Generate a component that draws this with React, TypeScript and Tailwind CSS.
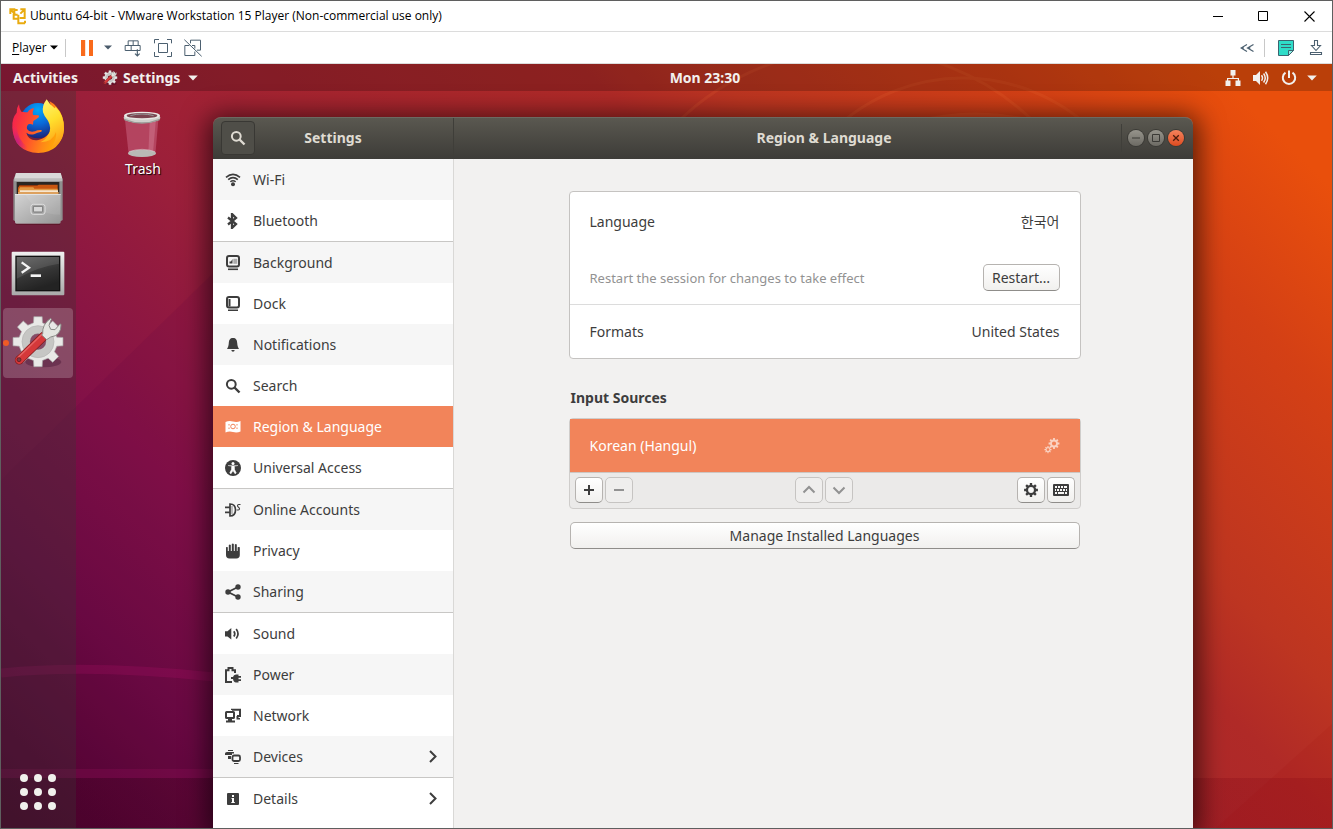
import React from "react";

type IconProps = { className?: string };

function gearPath(cx: number, cy: number, outer: number, inner: number, teeth: number, hole: number) {
  const pts: string[] = [];
  const step = (Math.PI * 2) / teeth;
  for (let i = 0; i < teeth; i++) {
    const a = i * step - Math.PI / 2;
    const corners: [number, number][] = [
      [inner, -0.3],
      [outer, -0.21],
      [outer, 0.21],
      [inner, 0.3],
    ];
    for (const [r, k] of corners) {
      pts.push(`${(cx + r * Math.cos(a + k * step)).toFixed(2)} ${(cy + r * Math.sin(a + k * step)).toFixed(2)}`);
    }
  }
  return `M${pts.join("L")}ZM${cx - hole} ${cy}a${hole} ${hole} 0 1 0 ${hole * 2} 0a${hole} ${hole} 0 1 0 ${-hole * 2} 0Z`;
}

function Glyph({ children, className = "size-4" }: { children: React.ReactNode; className?: string }) {
  return (
    <svg viewBox="0 0 16 16" className={`shrink-0 ${className}`} fill="currentColor" aria-hidden="true">
      {children}
    </svg>
  );
}

const WifiIcon = () => (
  <Glyph>
    <g fill="none" stroke="currentColor" strokeWidth="1.7">
      <path d="M1 5.3Q8-.6 15 5.3" />
      <path d="M3.2 7.7Q8 3.6 12.8 7.7" />
      <path d="M5.3 9.8Q8 7.6 10.7 9.8" strokeWidth="1.4" />
    </g>
    <circle cx="8" cy="12.3" r="2" />
  </Glyph>
);
const BluetoothIcon = () => (
  <Glyph>
    <path d="M3 4.500l8 6.500-4 4V1l4 4-8 6.500" fill="none" stroke="currentColor" strokeWidth="2.300" />
  </Glyph>
);
const BackgroundIcon = () => (
  <Glyph>
    <rect x="2" y="1" width="12" height="10.5" rx="2" fill="none" stroke="currentColor" strokeWidth="2" />
    <path d="M4.5 8.5h3V4L6 6.5H4.5z" />
    <path d="M8.3 3.8h4v5h-4z" opacity=".4" />
    <path d="M3 13.5h10v1.6H3z" />
  </Glyph>
);
const DockIcon = () => (
  <Glyph>
    <rect x="2" y="1" width="12" height="10.5" rx="2" fill="none" stroke="currentColor" strokeWidth="2" />
    <path d="M3.5 3h2v7.5h-2zM3 13.5h10v1.6H3z" />
  </Glyph>
);
const BellIcon = () => (
  <Glyph>
    <path d="M8 1c3 0 4 2 4.2 5 .2 3 .8 4.500 1.800 6H2c1-1.500 1.600-3 1.800-6C4 3 5 1 8 1zM6.300 13h3.400Q9.500 14.800 8 14.800T6.300 13z" />
  </Glyph>
);
const SearchIcon = ({ className }: IconProps) => (
  <Glyph className={className}>
    <circle cx="6.300" cy="6.300" r="4.400" fill="none" stroke="currentColor" strokeWidth="2" />
    <path d="M9.500 9.500l5 5" stroke="currentColor" strokeWidth="2.400" />
  </Glyph>
);
const FlagIcon = () => (
  <Glyph>
    <path d="M.500 3Q4 1.500 8 2.500T15.500 2v10.500Q12 14 8 13T.500 13.500z" />
    <g fill="none" stroke="#f2845a" strokeWidth="1">
      <circle cx="8" cy="7.500" r="2.300" />
      <path d="M4 5v1.500M4 8.500V10M12 5v1.500M12 8.500V10" />
    </g>
  </Glyph>
);
const AccessIcon = () => (
  <Glyph>
    <circle cx="8" cy="8" r="8" />
    <circle cx="8" cy="3.400" r="1.500" fill="#fff" />
    <path d="M3 5.500l3.700.6-.2 3.400L4.800 13l1.200.7L8 10.500l2 3.200 1.200-.7-1.700-3.500-.2-3.400 3.700-.6" fill="#fff" stroke="#fff" strokeWidth=".6" />
  </Glyph>
);
const AccountsIcon = () => (
  <Glyph>
    <path d="M0 4.500h5v1.800H0zM0 9.500h5v1.800H0z" />
    <path d="M5 2c4 0 5.500 3 5.500 6S9 14 5 14z" fill="none" stroke="currentColor" strokeWidth="1.700" />
    <path d="M6 4h2v8H6z" opacity=".3" />
    <path d="M15.500 2.500h-1.800q-1.200 0-1.200 1.200 0 .9 1 1.500t1 1.600q0 1.200-1.200 1.200h-1.500" fill="none" stroke="currentColor" strokeWidth="1.100" />
  </Glyph>
);
const PrivacyIcon = () => (
  <Glyph>
    <path d="M1 4.300q.9-.7 1.800 0V8h1V2q.9-.8 2 0v6h1V.900q1-.8 2 0V8h1V1.500q1-.8 2 0V8h.8V4.300q1.200-.8 2.200 0V12q0 3.400-3.400 3.400H4.400Q1 15.400 1 12z" />
  </Glyph>
);
const ShareIcon = () => (
  <Glyph>
    <path d="M13 3L3 8l10 5" fill="none" stroke="currentColor" strokeWidth="1.800" />
    <circle cx="13" cy="3" r="2.700" />
    <circle cx="3" cy="8" r="2.700" />
    <circle cx="13" cy="13" r="2.700" />
  </Glyph>
);
const SoundIcon = () => (
  <Glyph>
    <path d="M0 5.200h2.500L6.300 2v11.500L2.500 10.500H0z" />
    <path d="M8.800 5.200q2 2.600 0 5.200M11.200 3q3.600 4.800 0 9.600" fill="none" stroke="currentColor" strokeWidth="1.700" />
  </Glyph>
);
const PowerPlugIcon = () => (
  <Glyph>
    <path d="M7 15H1V3.200h2.500V1h4v2.200H10V6" fill="none" stroke="currentColor" strokeWidth="2" />
    <path d="M13.500 7.500H11Q8.500 7.700 8 10H6v2h2q.5 3.300 3 3.500h2.500V14H16v-1.700h-2.500v-1.600H16V9h-2.500z" />
  </Glyph>
);
const NetworkIcon = () => (
  <Glyph>
    <rect x="1" y="4" width="8" height="6" rx=".6" fill="none" stroke="currentColor" strokeWidth="2" />
    <path d="M1 12.500h9v2H1zM3 10h4v3H3z" />
    <path d="M7 2V1.800h8v6.200h-3" fill="none" stroke="currentColor" strokeWidth="2" />
    <path d="M11.500 8h2v2H15v1.500h-3.500z" />
  </Glyph>
);
const DevicesIcon = () => (
  <Glyph>
    <path d="M3 1h5v1H3zM0 6V4.500Q0 3 2 3h7v1.500H7V6H0zM3 7h3v3H3z" />
    <rect x="7.500" y="6.500" width="7.500" height="5.500" rx="1.500" fill="none" stroke="currentColor" strokeWidth="1.800" />
    <path d="M9 14h4.500v1H9z" />
  </Glyph>
);
const DetailsIcon = () => (
  <Glyph>
    <rect x="2" y="2" width="12" height="12" rx="1" />
    <path d="M7 4h2v2H7zM6.500 7H9v4h.8v1H6.300v-1H7V8h-.5z" fill="#fff" />
  </Glyph>
);
const ChevronRight = () => (
  <Glyph>
    <path d="M5 2L10.500 7.500 5 13" fill="none" stroke="currentColor" strokeWidth="2" />
  </Glyph>
);

const groups = [
  [
    { label: "Wi-Fi", Icon: WifiIcon },
    { label: "Bluetooth", Icon: BluetoothIcon },
  ],
  [
    { label: "Background", Icon: BackgroundIcon },
    { label: "Dock", Icon: DockIcon },
    { label: "Notifications", Icon: BellIcon },
    { label: "Search", Icon: SearchIcon },
    { label: "Region & Language", Icon: FlagIcon },
    { label: "Universal Access", Icon: AccessIcon },
  ],
  [
    { label: "Online Accounts", Icon: AccountsIcon },
    { label: "Privacy", Icon: PrivacyIcon },
    { label: "Sharing", Icon: ShareIcon },
  ],
  [
    { label: "Sound", Icon: SoundIcon },
    { label: "Power", Icon: PowerPlugIcon },
    { label: "Network", Icon: NetworkIcon },
    { label: "Devices", Icon: DevicesIcon, more: true },
  ],
  [{ label: "Details", Icon: DetailsIcon, more: true }],
] as { label: string; Icon: React.FC<IconProps>; more?: boolean }[][];

const shadedRows = new Set(["Wi-Fi", "Background", "Notifications", "Online Accounts", "Sharing", "Power", "Devices"]);

function Wallpaper() {
  return (
    <svg
      className="absolute inset-0 h-full w-full"
      viewBox="0 0 1331 764"
      preserveAspectRatio="none"
      aria-hidden="true"
    >
      <defs>
        <linearGradient id="wall" gradientUnits="userSpaceOnUse" x1="0" y1="764" x2="1048" y2="-284">
          <stop offset="0" stopColor="#480029" />
          <stop offset=".05" stopColor="#540433" />
          <stop offset=".147" stopColor="#6d0b43" />
          <stop offset=".247" stopColor="#831147" />
          <stop offset=".388" stopColor="#9b1f3a" />
          <stop offset=".49" stopColor="#a62430" />
          <stop offset=".64" stopColor="#b02a27" />
          <stop offset=".7" stopColor="#bd3521" />
          <stop offset=".84" stopColor="#d44015" />
          <stop offset=".94" stopColor="#e94f0c" />
          <stop offset="1" stopColor="#e94f0c" />
        </linearGradient>
        <linearGradient id="floor" x1="0" y1="0" x2="1" y2="0">
          <stop offset="0" stopColor="#300018" stopOpacity=".22" />
          <stop offset="1" stopColor="#800010" stopOpacity=".22" />
        </linearGradient>
      </defs>
      <rect width="1331" height="764" fill="url(#wall)" />
      <path d="M0 416L330 94V764H0z" fill="#5a0040" opacity=".12" />
      <path d="M0 609Q90 600 213 613T420 645" fill="none" stroke="#b0106a" strokeWidth="9" opacity=".24" />
      <path d="M0 705h600v9H0z" fill="#a01060" opacity=".24" />
      <path d="M0 714h1331v50H0z" fill="url(#floor)" />
      <path d="M1215 764L1331 660v104z" fill="#900" opacity=".08" />
      <g fill="none" stroke="#f37038" strokeWidth="3" opacity=".16">
        <circle cx="962" cy="201" r="187" />
        <circle cx="855" cy="239" r="254" />
      </g>
      <path d="M915 56Q975 41 1035 56z" fill="#f37038" opacity=".2" />
    </svg>
  );
}

function Firefox() {
  return (
    <svg viewBox="30 27 168 168" className="size-14" aria-hidden="true">
      <defs>
        <linearGradient id="ffBody" x1="0" y1=".3" x2="1" y2=".6">
          <stop offset="0" stopColor="#f5214e" />
          <stop offset=".35" stopColor="#ff4a2f" />
          <stop offset=".7" stopColor="#ff8a16" />
          <stop offset="1" stopColor="#ffb500" />
        </linearGradient>
        <linearGradient id="ffTail" x1=".3" y1="0" x2=".6" y2="1">
          <stop offset="0" stopColor="#fff36b" />
          <stop offset=".45" stopColor="#ffdf2d" />
          <stop offset="1" stopColor="#ff9a14" />
        </linearGradient>
        <radialGradient id="ffGlobe" cx=".5" cy=".2" r=".8">
          <stop offset="0" stopColor="#02a6f8" />
          <stop offset=".5" stopColor="#0a68d8" />
          <stop offset="1" stopColor="#1a2478" />
        </radialGradient>
        <radialGradient id="ffEdge" cx=".1" cy=".8" r=".5">
          <stop offset="0" stopColor="#a01a9a" />
          <stop offset="1" stopColor="#f0157a" stopOpacity="0" />
        </radialGradient>
      </defs>
      <circle cx="114" cy="92" r="53" fill="url(#ffGlobe)" />
      <path
        d="M57 43q-8 11-7 25Q35 85 37 113q5 72 78 76 68-2 77-72 1-40-22-66-10-12-22-18 14 36 11 62-5 45-44 55-29 5-36-22 10 8 23 5 10-6 22-8 4-4-1-5-13 0-18 4-16 5-24-7-2-11 6-15 8-1 12 2l1-11q10-6 17-12l-1-5-17-1q-3-9 3-20-13 1-19 12-16-2-19-2-7-9-7-22z"
        fill="url(#ffBody)"
      />
      <path d="M50 68Q35 85 37 113q5 72 78 76-40-15-56-45-12-25-9-76z" fill="url(#ffEdge)" />
      <path
        d="M140 28q-15 20-11 39 3 11 15 25 13 22 0 44-8 15-23 21 38-1 47-31 4 18-14 48 36-14 38-56 1-44-25-67l-3 4q-16-12-24-27z"
        fill="url(#ffTail)"
      />
    </svg>
  );
}

function Files() {
  return (
    <svg viewBox="30 243 168 168" className="size-14" aria-hidden="true">
      <defs>
        <linearGradient id="cab" x1="0" y1="0" x2="1" y2="1">
          <stop offset="0" stopColor="#d4d4d4" />
          <stop offset="1" stopColor="#959595" />
        </linearGradient>
      </defs>
      <path d="M48 249h134l6 20v119q0 5-6 5H45q-5 0-5-5V270z" fill="#8f8f8f" />
      <path d="M48 249h134l5 17H43z" fill="#d9d9d9" />
      <path d="M43 266h144v8H43z" fill="#bcbcbc" />
      <path d="M50 276h128v42H50z" fill="#2b2622" />
      <path d="M58 285h112v30H58z" fill="#7c2e0c" />
      <path d="M54 293l4-6h54l4-3h57v28H54z" fill="#c9560f" />
      <path d="M56 300l4-8h40l3 4h70v18H56z" fill="#e39a45" />
      <path d="M60 301h114v14H60z" fill="#f6e6cf" />
      <path d="M54 306h122v8H54z" fill="#dda15e" />
      <path d="M45 312h137v84q0 5-5 5H50q-5 0-5-5z" fill="url(#cab)" />
      <path d="M45 312h137v2H45z" fill="#eee" />
      <path d="M76 314h104v60q-70 0-104-60z" fill="#fff" opacity=".08" />
      <rect x="93" y="343" width="42" height="30" rx="7" fill="#a8a8a8" stroke="#e0e0e0" strokeWidth="3" />
      <rect x="100" y="349" width="28" height="17" rx="2" fill="#d8d8d8" stroke="#777" strokeWidth="3" />
      <path d="M47 403h133" stroke="#300" strokeWidth="3" opacity=".35" />
    </svg>
  );
}

function Terminal() {
  return (
    <svg viewBox="30 459 168 168" className="size-14" aria-hidden="true">
      <defs>
        <linearGradient id="term" x1="0" y1="0" x2=".4" y2="1">
          <stop offset="0" stopColor="#5c5c5c" />
          <stop offset=".6" stopColor="#353535" />
          <stop offset="1" stopColor="#232323" />
        </linearGradient>
        <linearGradient id="frame" x1="0" y1="0" x2="0" y2="1">
          <stop offset="0" stopColor="#f0f0f0" />
          <stop offset="1" stopColor="#a9a9a9" />
        </linearGradient>
      </defs>
      <rect x="35" y="485" width="158" height="131" rx="3" fill="url(#frame)" />
      <rect x="46" y="497" width="135" height="107" fill="#111" />
      <rect x="50" y="501" width="127" height="99" fill="url(#term)" />
      <path d="M50 501h127v20q-60 8-127 45z" fill="#fff" opacity=".1" />
      <path d="M65 517l22 16-22 15" fill="none" stroke="#f4f4f4" strokeWidth="7" />
      <path d="M92 553h31v8H92z" fill="#f4f4f4" />
    </svg>
  );
}

function SettingsApp({ className = "size-14" }: IconProps) {
  return (
    <svg viewBox="30 675 168 168" className={className} aria-hidden="true">
      <ellipse cx="130" cy="816" rx="54" ry="16" fill="#300020" opacity=".3" />
      <path d={gearPath(114, 755, 76, 58, 8, 25)} fill="#e9e9e7" stroke="#a8a8a8" strokeWidth="2" fillRule="evenodd" strokeLinejoin="round" />
      <circle cx="114" cy="755" r="37" fill="none" stroke="#c6c6c4" strokeWidth="22" />
      <circle cx="114" cy="755" r="48" fill="none" stroke="#b4b4b2" strokeWidth="2" />
      <path d="M58 810L132 738" stroke="#7d1a1c" strokeWidth="27" strokeLinecap="round" />
      <path d="M58 810L132 738" stroke="#d5383a" strokeWidth="23" strokeLinecap="round" />
      <path d="M56 801L126 733" stroke="#f08080" strokeWidth="4" strokeLinecap="round" opacity=".6" />
      <circle cx="57" cy="809" r="6" fill="#7b3a48" stroke="#5c1416" strokeWidth="2" />
      <path
        d="M128 731q-2-28 24-46l2 3-7 18 5 12 13 1 15-17 3 1q1 34-31 38l-12 8-15-14z"
        fill="#e4e6e1"
        stroke="#8a8c88"
        strokeWidth="3"
        strokeLinejoin="round"
      />
    </svg>
  );
}

function TrashCan() {
  return (
    <svg viewBox="368 57 120 150" className="h-[50px] w-10" aria-hidden="true">
      <path d="M374 90l11 103q40 16 80 0l9-103z" fill="#c9637f" opacity=".55" />
      <path d="M448 96l18 0-8 92-14 4z" fill="#e6a0b2" opacity=".3" />
      <ellipse cx="425" cy="190" rx="42" ry="11" fill="#b9b9b5" />
      <path d="M386 185q40-14 78 0" fill="none" stroke="#e8e8e8" strokeWidth="2" opacity=".7" />
      <ellipse cx="425" cy="83" rx="55" ry="16" fill="#cfcfcb" />
      <ellipse cx="425" cy="77" rx="54" ry="12" fill="#e9e9e6" />
      <ellipse cx="425" cy="77" rx="46" ry="8" fill="#7a4450" />
      <path d="M390 77q35-10 70 0" stroke="#999" strokeWidth="3" fill="none" />
      <path d="M372 86q53 22 106 0v5q-53 20-106 0z" fill="#9b9b97" />
    </svg>
  );
}

function VmTitleBar() {
  return (
    <header className="flex h-[31px] items-center border-b border-[#dcdcdc] bg-white pl-2 text-xs text-black">
      <svg viewBox="26 20 51 51" className="mr-1 size-[17px]" fill="none" stroke="#e9ab10" strokeWidth="6" aria-hidden="true">
        <path d="M30 38V24h15M30 24l14 14M42 35V26h10M60 24h13v14M73 24L60 37M73 38v12H58M52 40H40v12h14V40M54 52v14h20M74 58v8" />
      </svg>
      <h1 className="font-['Open_Sans',sans-serif] text-xs">
        Ubuntu 64-bit - VMware Workstation 15 Player (Non-commercial use only)
      </h1>
      <div className="ml-auto flex h-full">
        <button aria-label="Minimize" className="flex h-full w-[45px] items-center justify-center">
          <svg viewBox="0 0 11 11" className="size-[11px]" stroke="#000">
            <path d="M0 5.500h10" />
          </svg>
        </button>
        <button aria-label="Maximize" className="flex h-full w-[45px] items-center justify-center">
          <svg viewBox="0 0 11 11" className="size-[11px]" fill="none" stroke="#000">
            <path d="M.500.500h9v9h-9z" />
          </svg>
        </button>
        <button aria-label="Close" className="flex h-full w-[46px] items-center justify-center">
          <svg viewBox="0 0 11 11" className="size-[11px]" fill="none" stroke="#000" strokeWidth="1.100">
            <path d="M.500.500l10 10M10.500.500l-10 10" />
          </svg>
        </button>
      </div>
    </header>
  );
}

const Caret = ({ className }: IconProps) => (
  <svg viewBox="0 0 8 5" className={className} fill="currentColor" aria-hidden="true">
    <path d="M0 .500h8L4 4.500z" />
  </svg>
);

function VmToolbar() {
  return (
    <div className="flex h-8 items-center border-b border-[#dcdcdc] bg-white pl-[11px] pr-[9px] font-['Open_Sans',sans-serif] text-xs text-black">
      <button className="flex items-center gap-[3px]">
        <span>
          <span className="underline underline-offset-2">P</span>layer
        </span>
        <Caret className="h-[5px] w-2" />
      </button>
      <div className="ml-[7px] h-[18px] w-px bg-[#c8c8c8]" />
      <button aria-label="Suspend" className="ml-[15px]">
        <svg viewBox="0 0 12 16" className="h-4 w-3" fill="#f96a1b">
          <path d="M0 0h4.200v16H0zM8 0h4.200v16H8z" />
        </svg>
      </button>
      <button aria-label="Power options" className="ml-[11px] text-[#4a5b6b]">
        <Caret className="h-[5px] w-2" />
      </button>
      <button aria-label="Send Ctrl+Alt+Del" className="ml-3">
        <svg viewBox="372 113 54 54" className="size-[18px]" fill="none" stroke="#4c6070" strokeWidth="3">
          <path d="M384.500 132.500v-14h30v14M375.500 132.500h45v15h-45zM399.500 118.500v14M393.500 132.500v15" />
          <path d="M412 144v18M405 157l7 7 7-7" strokeWidth="3.500" />
        </svg>
      </button>
      <button aria-label="Full screen" className="ml-3">
        <svg viewBox="462 114 54 54" className="size-[18px]" fill="none" stroke="#4c6070" strokeWidth="3">
          <path d="M463.500 127v-11.500H477M501 115.500h13.500V127M463.500 153v13.500H477M501 166.500h13.500V153M475.500 127.500h27v27h-27z" />
        </svg>
      </button>
      <button aria-label="Unity mode" className="ml-3">
        <svg viewBox="552 114 54 54" className="size-[18px]" fill="none" stroke="#4c6070" strokeWidth="3">
          <path d="M568 133.500h-13.500v30h30v-12M571.500 127v-9.500h30v30h-11M576 133.500h8.500v9M553 116l52 50" />
        </svg>
      </button>
      <button aria-label="Collapse toolbar" className="ml-auto">
        <svg viewBox="0 0 14 8" className="h-2 w-3.5" fill="none" stroke="#4c6070" strokeWidth="1.200">
          <path d="M7 .500L1 4l6 3.500M13.500.500L7.500 4l6 3.500M1 4h3M7.500 4h3" />
        </svg>
      </button>
      <div className="ml-2.5 h-[18px] w-px bg-[#c8c8c8]" />
      <button aria-label="Messages" className="ml-[13px]">
        <svg viewBox="0 0 16 16" className="size-4">
          <path d="M.500.500h15v10l-5 5H.500z" fill="#2fdcc8" stroke="#3c6470" />
          <path d="M10.500 15.500v-5h5z" fill="#8ef0e4" stroke="#3c6470" />
          <path d="M3 4.500h10M3 7.500h10" stroke="#3c6470" />
        </svg>
      </button>
      <button aria-label="Device status" className="ml-[15px]">
        <svg viewBox="0 0 14 16" className="h-4 w-3.5" fill="none" stroke="#4c6070" strokeWidth="1.100">
          <path d="M5.500.500h3v5h3L7 10.500 2.500 5.500h3zM1.500 12.500h11v2h-11z" />
        </svg>
      </button>
    </div>
  );
}

function TopBar() {
  return (
    <div className="relative grid h-[27px] grid-cols-3 items-center bg-black/20 pl-3 pr-[15px] text-sm font-bold text-[#f2f0ee]">
      <div className="flex items-center">
        <button>Activities</button>
        <button className="ml-6 flex items-center">
          <SettingsApp className="mr-[5px] size-4" />
          Settings
          <Caret className="ml-2 h-[6px] w-2.5" />
        </button>
      </div>
      <time className="pl-20 text-center">Mon 23:30</time>
      <button aria-label="System menu" className="ml-auto flex items-center gap-3">
        <svg viewBox="0 0 16 16" className="size-4" fill="currentColor">
          <path d="M5.500 0h5v5.500h-5zM.500 10.500h5V16h-5zM10.500 10.500h5V16h-5zM7.400 5h1.200v3H14v3h-1.200V9H3.200v2H2V8h5.400z" />
        </svg>
        <svg viewBox="0 0 16 16" className="size-4" fill="currentColor">
          <path d="M0 5h3l4-4v14l-4-4H0z" />
          <path d="M8.500 5.300q2 2.700 0 5.400M10.600 3.500q3.300 4.500 0 9M12.500 1.800q4.400 6.200 0 12.400" fill="none" stroke="currentColor" strokeWidth="1.500" />
        </svg>
        <svg viewBox="0 0 16 16" className="size-4" fill="none" stroke="currentColor" strokeWidth="2">
          <path d="M8 .500v7.500M4.500 2.700a6.200 6.200 0 1 0 7 0" />
        </svg>
        <Caret className="-ml-0.5 h-[6px] w-2.5" />
      </button>
    </div>
  );
}

function Dock() {
  return (
    <nav aria-label="Dock" className="relative flex w-[75px] shrink-0 flex-col gap-0.5 bg-[#3c3535]/35 pb-3 pl-0.5 pt-px">
      {[
        { name: "Firefox", Art: Firefox },
        { name: "Files", Art: Files },
        { name: "Terminal", Art: Terminal },
      ].map(({ name, Art }) => (
        <button key={name} aria-label={name} className="flex size-[70px] items-center justify-center">
          <Art />
        </button>
      ))}
      <button aria-label="Settings" className="relative flex size-[70px] items-center justify-center rounded bg-white/20">
        <span className="absolute left-0 top-8 size-1.5 rounded-full bg-[#ef5b25]" />
        <SettingsApp />
      </button>
      <button aria-label="Show Applications" className="mt-auto flex h-12 w-[70px] items-center justify-center">
        <span className="grid grid-cols-3 gap-1.5">
          {Array.from({ length: 9 }, (_, i) => (
            <span key={i} className="size-2 rounded-full bg-[#f0f0ec]" />
          ))}
        </span>
      </button>
    </nav>
  );
}

const smallButton =
  "flex h-[26px] w-7 items-center justify-center rounded-[5px] border text-[#3d3d3d] border-[#b6b3b0] border-b-[#8f8d8a] bg-linear-to-b from-white to-[#f1f0ee]";
const smallButtonOff =
  "flex h-[26px] w-7 items-center justify-center rounded-[5px] border text-[#929292] border-[#c6c4c2] bg-[#efeeed]";

function RegionPanel() {
  return (
    <main className="flex-1 border-l border-[#d9d8d6] bg-[#f2f1f0] pl-[26px] pr-6 pt-8 text-[#3d3d3d]">
      <div className="mx-auto w-full max-w-[512px]">
        <section className="rounded-sm border border-[#c5c3c1] bg-white">
          <div className="border-b border-[#dcdcdc] pb-3">
            <div className="flex h-[60px] items-center justify-between px-5">
              <span>Language</span>
              <span>한국어</span>
            </div>
            <div className="flex h-10 items-center justify-between px-5 pt-[11px] leading-5">
              <span className="text-[13px] text-[#929292]">Restart the session for changes to take effect</span>
              <button className="h-[27px] w-[77px] shrink-0 rounded-[5px] border border-[#b6b3b0] border-b-[#8f8d8a] bg-linear-to-b from-white to-[#f1f0ee]">
                Restart…
              </button>
            </div>
          </div>
          <div className="flex h-[53px] items-center justify-between px-5">
            <span>Formats</span>
            <span>United States</span>
          </div>
        </section>

        <h2 className="mt-[27px] pl-0.5 font-bold leading-6">Input Sources</h2>
        <section className="mt-2 rounded-sm border border-[#cfcdcb] bg-[#ebeae9]">
          <div className="flex h-[54px] items-center justify-between border-b border-[#cdc6c2] bg-[#f2845a] px-5 text-white">
            <span>Korean (Hangul)</span>
            <Glyph className="size-4 text-[#fad3c3]">
              <path fillRule="evenodd" d={gearPath(10, 5.5, 5.5, 4, 8, 2.1)} />
              <path fillRule="evenodd" d={gearPath(4, 11.6, 3.6, 2.5, 8, 1.4)} />
            </Glyph>
          </div>
          <div className="grid grid-cols-3 items-center px-[5px] pb-[5px] pt-1">
            <div className="flex gap-0.5">
              <button aria-label="Add input source" className={smallButton}>
                <Glyph>
                  <path d="M7 3h2v4h4v2H9v4H7V9H3V7h4z" />
                </Glyph>
              </button>
              <button aria-label="Remove input source" disabled className={smallButtonOff}>
                <Glyph>
                  <path d="M3 7h10v2H3z" />
                </Glyph>
              </button>
            </div>
            <div className="flex justify-center gap-0.5">
              <button aria-label="Move up" disabled className={smallButtonOff}>
                <Glyph>
                  <path d="M2.500 10.500L8 5l5.500 5.500" fill="none" stroke="currentColor" strokeWidth="2" />
                </Glyph>
              </button>
              <button aria-label="Move down" disabled className={smallButtonOff}>
                <Glyph>
                  <path d="M2.500 5.500L8 11l5.500-5.500" fill="none" stroke="currentColor" strokeWidth="2" />
                </Glyph>
              </button>
            </div>
            <div className="flex justify-end gap-0.5">
              <button aria-label="Input source options" className={smallButton}>
                <Glyph>
                  <path fillRule="evenodd" d={gearPath(8, 8, 7, 5.2, 8, 2.9)} />
                </Glyph>
              </button>
              <button aria-label="Show keyboard layout" className={smallButton}>
                <Glyph>
                  <path
                    fillRule="evenodd"
                    d="M1 2h14q1 0 1 1v10q0 1-1 1H1q-1 0-1-1V3q0-1 1-1zM2 4v2h2V4zm3 0v2h2V4zm3 0v2h2V4zm3 0v2h3V4zM2 7v2h1V7zm2 0v2h2V7zm3 0v2h2V7zm3 0v2h2V7zm3 0v2h1V7zM2 10v2h2v-2zm3 0v2h6v-2zm7 0v2h2v-2z"
                  />
                </Glyph>
              </button>
            </div>
          </div>
        </section>
        <div className="mt-[13px] px-px">
          <button className="h-[27px] w-full rounded-[5px] border border-[#b6b3b0] border-b-[#8f8d8a] bg-linear-to-b from-white to-[#f1f0ee] leading-5">
            Manage Installed Languages
          </button>
        </div>
      </div>
    </main>
  );
}

function SettingsWindow() {
  return (
    <section className="relative mr-[139px] mt-[26px] flex flex-1 flex-col rounded-t-lg text-sm shadow-[0_4px_26px_6px_rgba(0,0,0,0.6)]">
      <header className="flex h-[42px] shrink-0 items-center rounded-t-lg border-t border-[#6c6a62] bg-linear-to-b from-[#5a5850] to-[#3d3c38] pb-0.5 font-bold text-[#dfdbd2]">
        <div className="flex w-[241px] shrink-0 items-center self-stretch border-r border-[#3f3e39] pl-2">
          <button
            aria-label="Search settings"
            className="flex size-[34px] items-center justify-center rounded border border-[#393834] bg-[#4f4e48]"
          >
            <SearchIcon className="size-4" />
          </button>
          <h2 className="flex-1 pr-[42px] text-center">Settings</h2>
        </div>
        <h2 className="flex-1 pl-[73px] text-center">Region &amp; Language</h2>
        <div className="flex h-7 items-center gap-1 border-l border-[#403f3a] pl-1.5 pr-[9px]">
          <button aria-label="Minimize window" className="flex size-4 items-center justify-center rounded-full bg-linear-to-b from-[#96948c] to-[#6d6b64] text-[#3b3a36] ring-1 ring-[#3b3a36]">
            <Glyph>
              <path d="M4 7.500h8v1H4z" />
            </Glyph>
          </button>
          <button aria-label="Maximize window" className="flex size-4 items-center justify-center rounded-full bg-linear-to-b from-[#96948c] to-[#6d6b64] text-[#3b3a36] ring-1 ring-[#3b3a36]">
            <Glyph>
              <path d="M4.500 4.500h7v7h-7z" fill="none" stroke="currentColor" />
            </Glyph>
          </button>
          <button aria-label="Close window" className="flex size-4 items-center justify-center rounded-full bg-linear-to-b from-[#f4825b] to-[#de4a1d] text-[#4a1c0c] ring-1 ring-[#3b3a36]">
            <Glyph>
              <path d="M5.200 5.200l5.600 5.600M10.800 5.200l-5.600 5.600" stroke="currentColor" strokeWidth="1.300" />
            </Glyph>
          </button>
        </div>
      </header>
      <div className="flex flex-1">
        <nav aria-label="Settings sections" className="w-60 shrink-0 divide-y divide-[#c8c7c5] bg-white">
          {groups.map((rows) => (
            <ul key={rows[0].label}>
              {rows.map(({ label, Icon, more }) => {
                const active = label === "Region & Language";
                const tone = active
                  ? "bg-[#f2845a] text-white"
                  : shadedRows.has(label)
                    ? "bg-[#f6f6f6] text-[#3d3d3d]"
                    : "bg-white text-[#3d3d3d]";
                return (
                  <li key={label}>
                    <button
                      aria-current={active ? "page" : undefined}
                      className={`flex h-[41px] w-full items-center gap-3 px-3 text-left ${tone}`}
                    >
                      <Icon />
                      <span className="flex-1">{label}</span>
                      {more && <ChevronRight />}
                    </button>
                  </li>
                );
              })}
            </ul>
          ))}
        </nav>
        <RegionPanel />
      </div>
    </section>
  );
}

export default function App() {
  return (
    <div className="flex min-h-screen flex-col border border-[#5f5f5f] font-['Noto_Sans','Noto_Sans_CJK_KR',sans-serif]">
      <VmTitleBar />
      <VmToolbar />
      <div className="relative flex flex-1 flex-col overflow-hidden">
        <Wallpaper />
        <TopBar />
        <div className="relative flex flex-1">
          <Dock />
          <div className="w-[137px] shrink-0 pt-[18px]">
            <button className="ml-[33px] flex w-[68px] flex-col items-center text-sm leading-5 text-white [text-shadow:1px_1px_1px_#000]">
              <TrashCan />
              Trash
            </button>
          </div>
          <SettingsWindow />
        </div>
      </div>
    </div>
  );
}
